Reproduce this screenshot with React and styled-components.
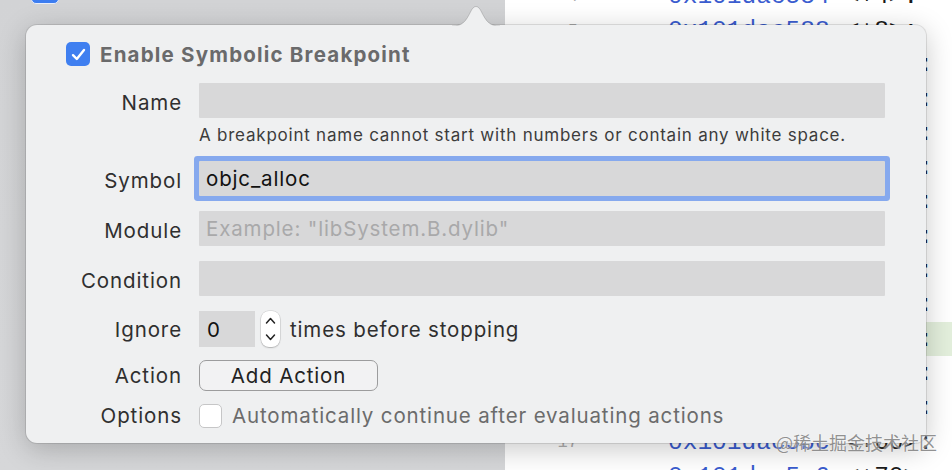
import styled, { createGlobalStyle } from 'styled-components';

const GlobalStyle = createGlobalStyle`
  html, body {
    margin: 0;
    padding: 0;
  }
  body {
    width: 952px;
    height: 470px;
    overflow: hidden;
    background: #fff;
    font-family: Inter, "Noto Sans", sans-serif;
  }
`;

const BASE = 0x101dac580;
const offsets = [4, 8, 12, 16, 20, 24, 28, 32, 36, 40, 44, 48, 52, 60, 70];
const codeLines = offsets.map((off, i) => ({
  num: i + 4,
  addr: '0x' + (BASE + off).toString(16),
  off: `<+${off}>:`,
}));

function Check() {
  return (
    <svg width='15' height='13' viewBox='0 0 15 13'>
      <path d='M2 7.2 L5.8 11 L13 2' fill='none' stroke='#fff' strokeWidth='2.4' strokeLinecap='round' strokeLinejoin='round' />
    </svg>
  );
}

function Chevrons() {
  return (
    <svg width='19' height='36' viewBox='0 0 19 36'>
      <path d='M5.5 12 L9.5 7.5 L13.5 12' fill='none' stroke='#222' strokeWidth='1.5' strokeLinecap='round' strokeLinejoin='round' />
      <path d='M5.5 24 L9.5 28.5 L13.5 24' fill='none' stroke='#222' strokeWidth='1.5' strokeLinecap='round' strokeLinejoin='round' />
    </svg>
  );
}

function Arrow() {
  return (
    <ArrowSvg width='48' height='24' viewBox='0 0 48 24'>
      <path d='M0 24 C 11 24, 14 19, 19 9 C 22 3, 26 3, 29 9 C 34 19, 37 24, 48 24 Z' fill='#eff0f1' />
      <path d='M0 24 C 11 24, 14 19, 19 9 C 22 3, 26 3, 29 9 C 34 19, 37 24, 48 24' fill='none' stroke='rgba(0,0,0,0.16)' strokeWidth='1' />
    </ArrowSvg>
  );
}

export default function App() {
  return (
    <>
      <GlobalStyle />
      <Screen>
        <Sidebar>
          <SidebarCheck />
        </Sidebar>
        <Editor>
          <CodeList>
            {codeLines.map((l) => (
              <CodeLine key={l.num} $active={l.num === 14}>
                <LineNo>{l.num}</LineNo>
                <Addr>{l.addr}</Addr>
                <Offset>{l.off}</Offset>
              </CodeLine>
            ))}
          </CodeList>
        </Editor>

        <Popover>
          <Arrow />
          <Header>
            <BlueBox>
              <Check />
            </BlueBox>
            <HeaderText>Enable Symbolic Breakpoint</HeaderText>
          </Header>

          <Row $mt={17}>
            <Label $drop>Name</Label>
            <Field />
          </Row>
          <Hint>A breakpoint name cannot start with numbers or contain any white space.</Hint>

          <Row $mt={16}>
            <Label $drop>Symbol</Label>
            <Field $focused>objc_alloc</Field>
          </Row>
          <Row $mt={15}>
            <Label $drop>Module</Label>
            <Field $placeholder>Example: "libSystem.B.dylib"</Field>
          </Row>
          <Row $mt={15}>
            <Label $drop>Condition</Label>
            <Field />
          </Row>
          <Row $mt={15}>
            <Label>Ignore</Label>
            <Inline>
              <NumberField>0</NumberField>
              <Stepper>
                <Chevrons />
              </Stepper>
              <Text>times before stopping</Text>
            </Inline>
          </Row>
          <Row $mt={13}>
            <Label>Action</Label>
            <ActionButton>Add Action</ActionButton>
          </Row>
          <Row $mt={12}>
            <Label>Options</Label>
            <Inline>
              <EmptyBox />
              <Text $muted>Automatically continue after evaluating actions</Text>
            </Inline>
          </Row>
        </Popover>

        <Watermark>@稀土掘金技术社区</Watermark>
      </Screen>
    </>
  );
}

const Screen = styled.div`
  position: relative;
  display: flex;
  width: 952px;
  height: 470px;
  overflow: hidden;
`;

const Sidebar = styled.div`
  width: 505px;
  flex-shrink: 0;
  background: linear-gradient(180deg, #d2d3d5 0%, #d6d7d9 100%);
`;

const SidebarCheck = styled.div`
  width: 26px;
  height: 24px;
  margin: -22px 0 0 31px;
  border-radius: 5px;
  background: #3d7df0;
  border: 1px solid #e8eefc;
`;

const Editor = styled.div`
  flex: 1;
  background: #fff;
`;

const CodeList = styled.div`
  margin-top: -21px;
`;

const CodeLine = styled.div`
  display: flex;
  align-items: center;
  height: 34.3px;
  white-space: nowrap;
  background: ${(p) => (p.$active ? '#e3efdc' : 'transparent')};
`;

const LineNo = styled.span`
  width: 73px;
  text-align: right;
  font-family: "Liberation Mono", monospace;
  font-size: 17px;
  color: #b0b0b0;
`;

const Addr = styled.span`
  margin-left: 90px;
  font-family: "Liberation Mono", monospace;
  font-size: 24.5px;
  color: #3a5ccf;
`;

const Offset = styled.span`
  margin-left: 15px;
  font-family: "Liberation Mono", monospace;
  font-size: 24.5px;
  color: #1a1a1a;
`;

const Popover = styled.div`
  position: absolute;
  left: 26px;
  top: 25px;
  width: 900px;
  height: 418px;
  box-sizing: border-box;
  padding: 17px 41px 0 0;
  display: flex;
  flex-direction: column;
  border-radius: 11px;
  background: #eff0f1;
  box-shadow: 0 0 0 1px rgba(0, 0, 0, 0.1), 0 6px 28px rgba(0, 0, 0, 0.22);
  font-size: 20.5px;
  letter-spacing: 0.85px;
`;

const ArrowSvg = styled.svg`
  position: absolute;
  left: 426px;
  top: -23px;
`;

const Header = styled.div`
  display: flex;
  align-items: center;
  gap: 10px;
  margin-left: 40px;
  height: 24px;
`;

const BlueBox = styled.div`
  width: 24px;
  height: 24px;
  border-radius: 5px;
  background: #3f7ff0;
  display: flex;
  align-items: center;
  justify-content: center;
`;

const HeaderText = styled.div`
  font-weight: 700;
  letter-spacing: 1.2px;
  color: #6a6a6b;
`;

const Row = styled.div`
  display: flex;
  align-items: center;
  gap: 17px;
  margin-top: ${(p) => p.$mt}px;
`;

const Label = styled.div`
  width: 156px;
  flex-shrink: 0;
  text-align: right;
  padding-top: ${(p) => (p.$drop ? 3 : 0)}px;
  letter-spacing: 0.9px;
  color: #2f2f2f;
`;

const Field = styled.div`
  flex: 1;
  height: 35px;
  box-sizing: border-box;
  padding: 0 7px;
  display: flex;
  align-items: center;
  background: #d8d8d9;
  border-radius: 1px;
  color: ${(p) => (p.$placeholder ? '#a9a9aa' : '#111')};
  box-shadow: ${(p) => (p.$focused ? '0 0 0 5px #86a9ee' : 'none')};
`;

const Hint = styled.div`
  margin: 7px 0 0 173px;
  font-size: 17px;
  letter-spacing: 0.77px;
  line-height: 20px;
  color: #3c3c3c;
`;

const Inline = styled.div`
  display: flex;
  align-items: center;
  gap: 10px;
`;

const NumberField = styled.div`
  width: 56px;
  height: 36px;
  box-sizing: border-box;
  padding-left: 8px;
  display: flex;
  align-items: center;
  background: #d8d8d9;
  color: #111;
  margin-right: -4px;
`;

const Stepper = styled.div`
  width: 19px;
  height: 36px;
  border-radius: 8px;
  background: #fff;
  box-shadow: 0 0 0 0.5px rgba(0, 0, 0, 0.15), 0 1px 1.5px rgba(0, 0, 0, 0.2);
  display: flex;
`;

const Text = styled.span`
  color: ${(p) => (p.$muted ? '#6b6b6b' : '#2f2f2f')};
`;

const ActionButton = styled.div`
  width: 179px;
  height: 31px;
  box-sizing: border-box;
  display: flex;
  align-items: center;
  justify-content: center;
  border: 1.5px solid #9c9c9d;
  border-radius: 7px;
  background: #f2f2f3;
  color: #222;
`;

const EmptyBox = styled.div`
  width: 23px;
  height: 24px;
  box-sizing: border-box;
  border-radius: 5px;
  background: #fff;
  border: 1px solid #c6c6c7;
`;

const Watermark = styled.div`
  position: absolute;
  left: 776px;
  top: 429px;
  font-family: "Noto Sans CJK SC", sans-serif;
  font-size: 18px;
  color: rgba(110, 110, 110, 0.75);
  text-shadow: 0 0 2px rgba(255, 255, 255, 0.9);
`;
